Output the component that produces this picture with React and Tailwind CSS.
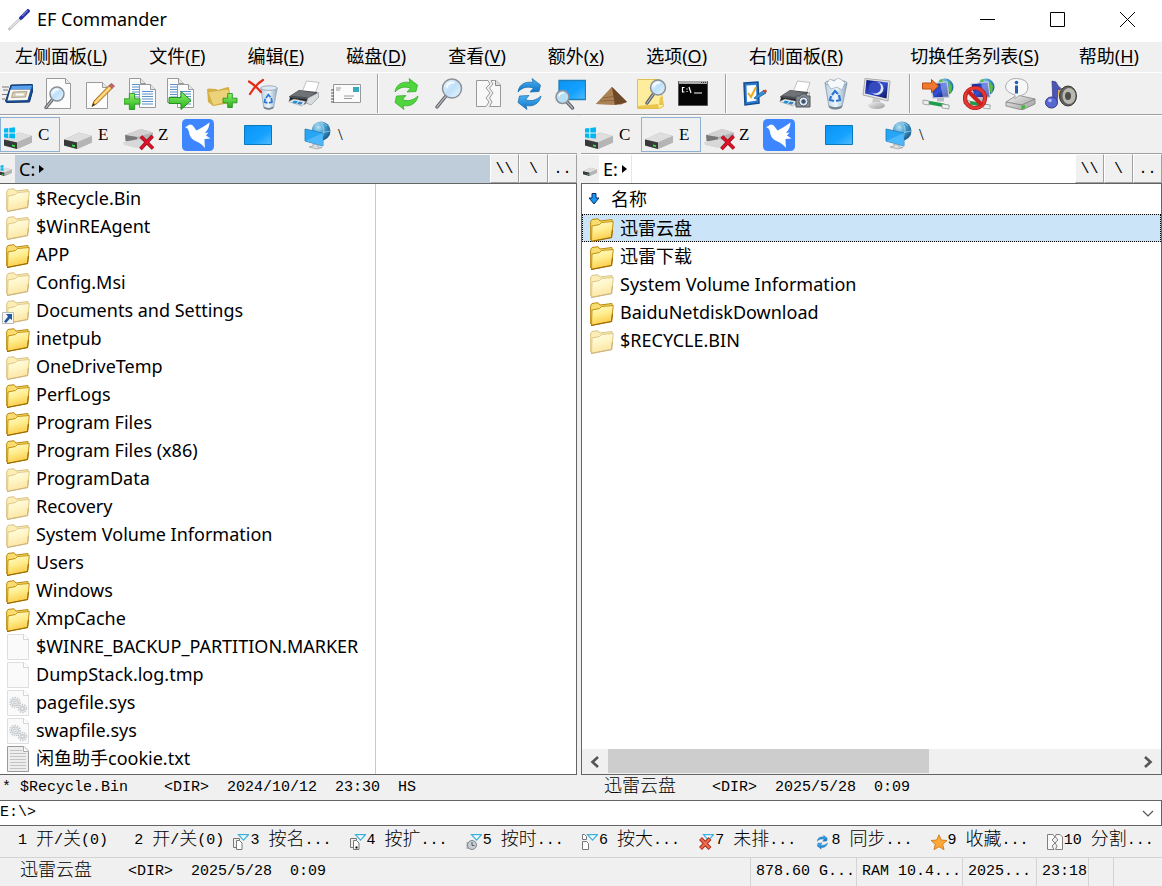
const UI = 'font-["Noto_Sans","Noto_Sans_CJK_SC",sans-serif]';

function Icon({ children, className = 'size-8', box = '0 0 32 32' }) {
  return (
    <svg viewBox={box} className={`shrink-0 ${className}`} aria-hidden="true">
      {children}
    </svg>
  );
}

function Defs() {
  return (
    <svg className="absolute size-0" aria-hidden="true">
      <defs>
        <linearGradient id="folder" x1="0" y1="0" x2="0.3" y2="1"><stop offset="0" stopColor="#fffbd0" /><stop offset="0.5" stopColor="#ffee90" /><stop offset="1" stopColor="#fccc4a" /></linearGradient>
        <linearGradient id="screen" x1="0" y1="0" x2="1" y2="1"><stop offset="0" stopColor="#0b93f5" /><stop offset="0.6" stopColor="#15a2ff" /><stop offset="1" stopColor="#55bdff" /></linearGradient>
        <linearGradient id="lens" x1="0" y1="0" x2="1" y2="1"><stop offset="0" stopColor="#f4fbff" /><stop offset="0.5" stopColor="#bfe0f8" /><stop offset="1" stopColor="#eaf6ff" /></linearGradient>
        <linearGradient id="green" x1="0" y1="0" x2="0" y2="1"><stop offset="0" stopColor="#8ff06a" /><stop offset="1" stopColor="#25b01c" /></linearGradient>
        <linearGradient id="blue" x1="0" y1="0" x2="0" y2="1"><stop offset="0" stopColor="#48b4f4" /><stop offset="1" stopColor="#1173c8" /></linearGradient>
        <linearGradient id="metal" x1="0" y1="0" x2="1" y2="1"><stop offset="0" stopColor="#f2f2f2" /><stop offset="1" stopColor="#9a9a9a" /></linearGradient>
        <linearGradient id="night" x1="0" y1="0" x2="1" y2="1"><stop offset="0" stopColor="#0a1575" /><stop offset="0.5" stopColor="#3452d8" /><stop offset="1" stopColor="#06104f" /></linearGradient>
        <radialGradient id="globe" cx="0.35" cy="0.3" r="0.8"><stop offset="0" stopColor="#b6e2f5" /><stop offset="0.5" stopColor="#3b96c8" /><stop offset="1" stopColor="#155280" /></radialGradient>
        <linearGradient id="bin" x1="0" y1="0" x2="1" y2="0"><stop offset="0" stopColor="#b9cfe2" /><stop offset="0.5" stopColor="#eef6fc" /><stop offset="1" stopColor="#8fa9c2" /></linearGradient>
      </defs>
    </svg>
  );
}

const Page = ({ x, y, w, h, c = 5 }) => (
  <>
    <path d={`M${x} ${y}h${w - c}l${c} ${c}v${h - c}h${-w}z`} fill="#fcfcfc" stroke="#9a9a9a" />
    <path d={`M${x + w - c} ${y}v${c}h${c}`} fill="#e8e8e8" stroke="#9a9a9a" />
  </>
);
const Lines = ({ x, y, w, n }) => (
  <path d={Array.from({ length: n }, (_, i) => `M${x} ${y + i * 2.5}h${w}`).join('')} stroke="#5a92cc" strokeWidth="1.1" />
);
const Plus = ({ x, y, s = 5 }) => (
  <path d={`M${x - s / 3} ${y - s}h${s / 1.5}v${s / 1.5}h${s / 1.5}v${s / 1.5}h${-s / 1.5}v${s / 1.5}h${-s / 1.5}v${-s / 1.5}h${-s / 1.5}v${-s / 1.5}h${s / 1.5}z`} fill="url(#green)" stroke="#1f8c14" strokeWidth="0.8" />
);
const Lens = ({ x, y, r, hx, hy, fill = 'url(#lens)' }) => (
  <>
    <path d={`M${x} ${y}L${hx} ${hy}`} stroke="#5c6066" strokeWidth="3.4" strokeLinecap="round" />
    <path d={`M${x} ${y}L${hx} ${hy}`} stroke="#b5b9bf" strokeWidth="1.2" strokeLinecap="round" />
    <circle cx={x} cy={y} r={r} fill={fill} stroke="#8b9097" strokeWidth="1.5" />
    <path d={`M${x - r * 0.55} ${y - r * 0.1}a${r * 0.6} ${r * 0.6} 0 0 1 ${r * 0.8} ${-r * 0.5}`} stroke="#fff" strokeWidth="1.4" fill="none" />
  </>
);
const Swap = ({ fill, edge }) => (
  <g fill={fill} stroke={edge} strokeWidth="0.7" strokeLinejoin="round">
    <path d="M5 14C6 6 13 3 20 4.500L19 .500 27.500 7 26 13.500 17 14 20.500 10C14 8 9 9.500 5 14z" />
    <path d="M28 18C26.500 26 19.500 29 13 27.500L14 31.500 5 24.500 6.500 18 16 17.500 12.500 21.500C18 24 23.500 22 28 18z" />
  </g>
);
const PrinterArt = () => (
  <>
    <path d="M14 14 18.500 3 31 4.500 27 16z" fill="#fff" stroke="#b0b4b8" strokeWidth="0.8" />
    <path d="M1 18.500 11 12 29 14 30.500 19 23 26 3 22z" fill="#4b4e52" />
    <path d="M3 17.500 11 12.500 27 15 20 19.500z" fill="#6f7377" />
    <path d="M20 20 30.500 14.500V19.500L23 27 18 25z" fill="#d9dcde" stroke="#8a8e92" strokeWidth="0.6" />
    <path d="M2 19.500 19 21.500 17 26.500 1 23z" fill="#24272b" />
    <path d="M.500 23.500 6 21 18 23.500 14 28z" fill="#eaf2f5" stroke="#888" strokeWidth="0.5" />
    <path d="M6 22.500l4 .8-2 2.500-4-1z" fill="#268fd0" /><path d="M11 23.500l4 .8-2 2.500-4-1z" fill="#3f7fc8" />
  </>
);
const BinArt = ({ full }) => (
  <>
    <path d="M5 5 9 29Q15 32.500 22 29L27 5z" fill="url(#bin)" stroke="#8899aa" strokeWidth="0.8" />
    <ellipse cx="16" cy="5" rx="11" ry="2.800" fill="#dceaf5" stroke="#8a9cae" />
    {full && <path d="M7 5 10 1 14 3 18 0 22 2 25 5 22 12 17 9 11 11z" fill="#f6f9fc" stroke="#9aa9b8" strokeWidth="0.7" />}
    <path d="M12 17l3-4 3 3M19 17l1 5-4 1M14 23l-4-1 1-4" fill="none" stroke="#2b78d4" strokeWidth="2.200" />
    <path d="M9 27.500Q15 31 22 27.500L21.500 30Q15 33 9.500 30z" fill="#77838e" />
  </>
);
const NetArt = () => (
  <>
    <circle cx="23" cy="9" r="8.500" fill="url(#globe)" />
    <path d="M17 2Q20 6 17 9L22 8 20 1zM26 3l4 5-1 8-3-4 1-4z" fill="#5cbd45" />
    <path d="M8 6 25 4 27 19 11 20z" fill="url(#night)" stroke="#c9ced8" strokeWidth="1.200" />
    <path d="M18 5 25 4 26.500 19 21 19.500z" fill="#b4c6f4" opacity="0.500" />
    <path d="M15 19.500h7v4h-7z" fill="#b8bcc4" />
    <path d="M2 24 9 25 20 27 27 29" stroke="#1e9d4a" strokeWidth="3.500" fill="none" />
    <path d="M1 22l6 1v4l-6-1zM20 26l7 1v4l-7-1z" fill="#eef0f0" stroke="#8a8f92" strokeWidth="0.700" />
  </>
);

const DriveArt = () => (
  <>
    <path d="M2 20.500 17 13.500 30 17V23.500L15 30 2 26.500z" fill="#a9a9a9" />
    <path d="M2 20.500 17 13.500 30 17 15 23.500z" fill="#dedede" />
    <path d="M2 20.500 15 23.500V30L2 26.500z" fill="#37393b" />
    <path d="M15 23.500 30 17V23.500L15 30z" fill="#b5b5b5" />
    <path d="M10 25.500l3 .8v1.800l-3-.8z" fill="#35e33b" />
  </>
);
const WinDrive = () => (
  <>
    <DriveArt />
    <path d="M2 9.500 6.300 9V13.500H2zM7.300 8.900 13 8.200V13.500H7.300zM2 14.500H6.300V19L2 18.500zM7.300 14.500H13V19.500L7.300 19z" fill="#00b7f0" />
  </>
);
const LostDrive = () => (
  <>
    <path d="M3 16 19 10 31 13.500V20L15 26 3 22z" fill="#b4b4b4" />
    <path d="M3 16 19 10 31 13.500 15 18z" fill="#d2d2d2" />
    <path d="M3 16 15 18V25L4 22z" fill="#777" />
    <path d="M1 23 17 20 29 25 15 29 2 26z" fill="#d8d8d8" />
    <path d="M19 17.500 31 29.500M30.500 17 18.500 30" stroke="#8d0713" strokeWidth="3.600" />
    <path d="M19 17.500 31 29.500M30.500 17 18.500 30" stroke="#e0112b" strokeWidth="2.400" />
  </>
);
const Bird = () => (
  <>
    <rect width="32" height="32" rx="4.500" fill="#3e86ff" />
    <path d="M3 8Q5.500 7.500 6.500 6 9.500 4.500 11.500 7.500L14.500 11.500Q20 9 27.500 3.500 27.500 9 23 14L26.500 13.500 24 16.500 28.500 19.500 22.500 20Q22.500 24 23 29 19 24 14.500 22.500 9 20.500 7.500 15.500 7 11.500 5.500 9.500z" fill="#fff" />
  </>
);
const ScreenArt = () => <path d="M2.500 6.500h27v19h-27z" fill="url(#screen)" stroke="#0879bd" />;
const Network = () => (
  <>
    <circle cx="19" cy="12" r="9.500" fill="url(#globe)" />
    <path d="M13 6q7-5 12 1M10 12q10 3 19 0M19 2.500q6 9 0 19" stroke="#a9d7ec" strokeWidth="0.700" fill="none" />
    <path d="M3 10 21 14V27L3 22z" fill="#28a6f5" stroke="#197ab7" strokeWidth="0.800" />
    <path d="M3 22 21 14V27z" fill="#65c3ff" opacity="0.600" />
    <path d="M11 25l5 1v2l4 .500-5 1.500-8-2 4-1z" fill="#d9dde0" stroke="#8d9296" strokeWidth="0.600" />
  </>
);

const groups = [
  [
    ['启动', <><path d="M1 9h7M2 12h5M1 16.500h5M1 21h3" stroke="#777" strokeWidth="1" /><path d="M10 7 31 6.500 33 8 28.500 24 5.500 24.500 4.500 23z" fill="#1a4f9c" stroke="#0f3467" /><path d="M11 8 31 7.500 30 11 10 11z" fill="#57a0ec" /><path d="M9.500 11.500 29.500 11.500 26.500 22 6.500 22.500z" fill="#faf7ea" /><path d="M12 14 26 13.500 24.500 19 10.500 19.500z" fill="#d5cfae" stroke="#877" strokeWidth="0.600" /><path d="M15 15.500h8l-.5 2h-8z" fill="#fff" /></>],
    ['查看', <><Page x={4.500} y={0.500} w={24} h={30} /><Lens x={15} y={16} r={7} hx={4} hy={29.500} /></>],
    ['编辑', <><Page x={3.500} y={4.500} w={21} h={26} /><path d="M9 28.500 11 23 26 7.500 29 10.500 14 25.500z" fill="#f7b842" stroke="#946123" strokeWidth="0.900" /><path d="M12 25 27.500 9" stroke="#ffe6a1" strokeWidth="1.300" /><path d="M26 7.500 29 10.500 31.500 8 28.500 5.500z" fill="#d35e68" stroke="#7c4f56" strokeWidth="0.700" /><path d="M9 28.500 10 25 12 27z" fill="#333" /></>],
    ['复制', <><Page x={5.500} y={0.500} w={16} h={24} /><Lines x={8} y={6.500} w={8} n={7} /><Page x={15.500} y={6.500} w={16} h={23} /><Lines x={18} y={13.500} w={11} n={6} /><Plus x={8} y={23.500} s={8} /></>],
    ['移动', <><Page x={2.500} y={0.500} w={16} h={24} /><Lines x={5} y={6.500} w={8} n={7} /><Page x={12.500} y={6.500} w={16} h={23} /><Lines x={15} y={13.500} w={11} n={6} /><path d="M4 19.500h12v-6L26 22.500 16 31.500v-6H4z" fill="url(#green)" stroke="#23941b" /></>],
    ['新建文件夹', <><path d="M1 11 3 10.500 10 11 12 12 20 9.500 23 9 25 25 7 28 2 24z" fill="#d4b045" /><path d="M2 14 22 11 26 23 7 27.500z" fill="#ecd278" stroke="#c9a43b" strokeWidth="0.600" /><Plus x={24} y={22.500} s={7} /></>],
    ['删除', <><g transform="translate(10 6) scale(.75 .82)"><BinArt /></g><path d="M2 3.500Q9 8 14 14M16 2Q9 6 3 16" stroke="#e52a18" strokeWidth="2.200" fill="none" strokeLinecap="round" /></>],
    ['打印', <PrinterArt />],
    ['邮件', <><path d="M4.500 6.500h27v18h-27z" fill="#fbfbfb" stroke="#999" /><path d="M24 9h6v5h-6z" fill="#36a9c0" /><path d="M7 10h5M7 12h4M15 18h10M15 20.500h8" stroke="#9a9a9a" /><path d="M2 12h3M2 15h3M2 18h3M2 21h3M2 24h3" stroke="#555" strokeWidth="1.200" /></>],
  ],
  [
    ['刷新', <Swap fill="#4fd63c" edge="#2fa524" />],
    ['搜索', <Lens x={21} y={10.500} r={9.500} hx={6} hy={29} />],
    ['拆分', <><path d="M4.500 2.500H16L18 6 14 10 18 15 14 20 17 24 14 28.500H4.500z" fill="#f8f8f8" stroke="#999" /><path d="M19 2.500H24L28.500 7V28.500H17.500L20 24 17.500 20 21 15 17.500 10 21 6z" fill="#f8f8f8" stroke="#999" /><path d="M23.500 2.500v5h5" fill="#ddd" stroke="#888" /></>],
    ['同步', <Swap fill="url(#blue)" edge="#1768a8" />],
    ['屏幕搜索', <><path d="M5 2.500h26.500v19H5z" fill="url(#screen)" stroke="#1f7fb8" strokeWidth="1.300" /><Lens x={8.500} y={19} r={6.500} hx={18.500} hy={30} fill="#b6def4" /></>],
    ['打包', <><path d="M1 26 17 9 32 24 26 26.500z" fill="#8b6239" /><path d="M1 26 17 9 20 27z" fill="#ab8355" /><path d="M17 9 32 24 20 27z" fill="#6d4826" /><path d="M8 20 22 18M5 23 28 22" stroke="#735030" strokeWidth="0.600" /></>],
    ['查找', <><path d="M1.500 1.500h22l4 27-4 2h-22z" fill="#ffed9e" stroke="#e2c04d" /><path d="M23 27h4v-8h-3zM2 28l20-2 1 4H2z" fill="#eac64f" /><Lens x={22} y={9.500} r={7.500} hx={11} hy={25} /></>],
    ['命令行', <><path d="M1.500 3.500h29v24h-29z" fill="#050505" stroke="#555" /><path d="M2 3h28v3H2z" fill="#aaa" /><path d="M24 4.500h1M26 4.500h1M28 4.500h1" stroke="#333" /><path d="M7.500 9.500H5.500v4.500h2M10 10.500v1M10 13v1M12 9l2 6M17 15h8" stroke="#fff" strokeWidth="1.200" fill="none" /></>],
  ],
  [
    ['选项', <><path d="M6 5 20 4 21 25 7 27z" fill="#2d7cd0" stroke="#124d93" strokeWidth="1.500" /><path d="M8.500 7.500 18 7 18.500 22.500 9 24z" fill="#fff" /><path d="M10 15 13 19 18 9" fill="none" stroke="#f1a820" strokeWidth="2" /><path d="M16 20 26 12 28 15 18 21z" fill="#3694dd" stroke="#17558f" strokeWidth="0.800" /><path d="M25 12.500l3-1 1 2-2 1.500z" fill="#d24225" /></>],
    ['截图打印', <><PrinterArt /><path d="M17 18h4l1-2h5l1 2h3v11H17z" fill="#858c94" stroke="#50575e" /><circle cx="24.500" cy="23.500" r="4.500" fill="#dfe7ef" stroke="#50575e" /><circle cx="24.500" cy="23.500" r="2.200" fill="#3d5676" /></>],
    ['回收站', <BinArt full />],
    ['屏幕保护', <><path d="M4 0.500 29 3 27 23 2 17z" fill="#e4e4e4" stroke="#aaa" /><path d="M5.500 2 27 4.500 25.500 20.500 4 15.500z" fill="url(#night)" /><circle cx="16" cy="10.500" r="6.500" fill="#dde4fd" /><circle cx="14" cy="9.500" r="6" fill="#344abe" /><path d="M12 20l7 2 1 4h-9z" fill="#c8c8c8" /><ellipse cx="15.500" cy="27.500" rx="8.500" ry="3.500" fill="url(#metal)" /></>],
  ],
  [
    ['连接网络', <><NetArt /><path d="M0.500 5h9V1.500l7 6.500-7 6.500V11h-9z" fill="#ef7a2f" stroke="#ba5113" /></>],
    ['断开网络', <><NetArt /><circle cx="12" cy="20" r="10" fill="none" stroke="#ae1717" strokeWidth="4.200" /><circle cx="12" cy="20" r="10" fill="none" stroke="#e43834" strokeWidth="2.800" /><path d="M5 13 19 27" stroke="#cb201e" strokeWidth="4" /></>],
    ['磁盘信息', <><path d="M2 24 13 17 31 21V26L18 32 2 28z" fill="url(#metal)" stroke="#818181" strokeWidth="0.800" /><path d="M2 24 18 27 31 21M18 27v5" stroke="#777" strokeWidth="0.800" fill="none" /><path d="M18 28l3-1v3l-3 1z" fill="#38bb28" /><path d="M14 18l-3 3v-4Q1 14 1.500 8 4 0 12.500 0.500 24 1 24 9 24 17 14 18z" fill="#f5f7f8" stroke="#aaaeb2" /><circle cx="12.500" cy="4.500" r="1.800" fill="#2a5cad" /><path d="M11 7.500h3v8h-3z" fill="#2a5cad" /></>],
    ['多媒体', <><path d="M7 3 11 4Q12 8 18 12 16 14 13 11L12 26H8z" fill="#4b55b8" stroke="#2f3779" strokeWidth="0.700" /><ellipse cx="6.500" cy="24.500" rx="6" ry="5.500" fill="#5967d0" stroke="#353b8b" /><circle cx="5" cy="22.500" r="1.800" fill="#b3bcff" /><path d="M13 13 20 9V25L14 21z" fill="#e7a834" /><ellipse cx="23" cy="18" rx="8.500" ry="10" fill="#61615c" stroke="#3c3c3c" /><ellipse cx="24" cy="18" rx="6.500" ry="8" fill="#b9b9b2" /><ellipse cx="23" cy="18" rx="3" ry="4" fill="#4c4c48" /></>],
  ],
];

function Mono({ text }) {
  return text.split(/([\u4e00-\u9fff]+)/).map((part, i) =>
    i % 2 ? <span key={i} className="align-[-1px] text-[18px] leading-none font-light">{part}</span> : part,
  );
}

function MenuItem({ label, hot }) {
  return (
    <button type="button" className="px-5 text-[18px] leading-[29px] whitespace-nowrap">
      {label}(<span className="underline decoration-1 underline-offset-2">{hot}</span>)
    </button>
  );
}

const drives = [
  ['C', <WinDrive />],
  ['E', <DriveArt />],
  ['Z', <LostDrive />],
  ['', <Bird />, '迅雷'],
  ['', <ScreenArt />, '桌面'],
  ['\\', <Network />],
];

function DriveBar({ active }) {
  return (
    <div className="flex h-[38px] items-center border-t border-white">
      {drives.map(([letter, art, label], i) => (
        <button
          key={i}
          type="button"
          aria-label={label}
          className={`flex h-[35px] w-[60px] items-center gap-1 border pl-px ${letter && letter === active ? 'border-[#8fb1d3]' : 'border-transparent'}`}
        >
          <Icon>{art}</Icon>
          <span className="font-['Liberation_Serif',serif] text-[17px]">{letter}</span>
        </button>
      ))}
    </div>
  );
}

function PathBar({ drive, art, active }) {
  return (
    <div className="flex h-[30px] border-t border-[#a0a0a0] bg-[#f0f0f0]">
      <div className={`flex items-center border-t border-white ${active ? 'w-[18px] justify-center' : 'w-[15px] justify-end pr-0.5'}`}>
        <Icon className="size-4">{art}</Icon>
      </div>
      <div className={`flex flex-1 items-center gap-1 border-t border-white pl-1 ${UI} text-[18px] ${active ? 'bg-white' : 'bg-[#bfcddb]'}`}>
        <span>{drive}:</span>
        <Icon className="h-2 w-[5px]" box="0 0 5 8"><path d="M0 0 5 4 0 8z" /></Icon>
        {active && <span className="h-full w-px bg-[#e6e6e6]" />}
      </div>
      {['\\\\', '\\', '..'].map((t) => (
        <button key={t} type="button" className="w-[29px] border-t border-r border-b border-l border-t-white border-r-[#a0a0a0] border-b-[#a0a0a0] border-l-white pt-1">
          {t}
        </button>
      ))}
    </div>
  );
}

function Folder({ faded, link }) {
  return (
    <span className="relative mt-1 flex">
      <Icon className={faded ? 'size-6 opacity-50' : 'size-6'} box="0 0 24 24">
        <path d="M.700 3.500 2 1.500 8 .700 10 3 22 1.500V4L20 19 2 23 .700 22z" fill="#f7dc6f" stroke="#b98708" />
        <path d="M2 8 9.500 6.500 11.500 4.500 23.300 3.500 21.500 19.500 1.500 23.300z" fill="url(#folder)" stroke="#c4920e" />
        <path d="M1 23.500 21.500 19.500 22.500 12" fill="none" stroke="#9c6c04" strokeWidth="1.200" />
      </Icon>
      {link && (
        <Icon className="absolute -left-1 top-3 size-3" box="0 0 12 12">
          <path d="M.500.500h11v11H.500z" fill="#f7f7f7" stroke="#b8b8b8" />
          <path d="M4 2h6v6L8 6.500 4 11 2 9.500 6 4.500z" fill="#22599e" />
        </Icon>
      )}
    </span>
  );
}

const Gear = ({ x, y, r }) => (
  <g stroke="#c5c9cc" fill="none">
    <circle cx={x} cy={y} r={r} strokeWidth="1.500" strokeDasharray="1.500 1" />
    <circle cx={x} cy={y} r={r - 1.500} fill="#e3e6e8" />
    <circle cx={x} cy={y} r="1.200" fill="#fff" />
  </g>
);

function FileIcon({ kind }) {
  const strong = kind === 'text';
  return (
    <Icon className="ml-px mt-0.5 h-[26px] w-[22px]" box="0 0 22 26">
      <path d="M.500.500H17L21.500 5V25.500H.500z" fill={strong ? '#eeeeee' : '#fafafa'} stroke={strong ? '#999' : '#dedede'} />
      <path d="M16.500.500V5.500H21.500" fill="#fff" stroke={strong ? '#aaa' : '#d5d5d5'} />
      {strong && <path d="M3 4.500h12M3 7.500h16M3 10.500h16M3 13.500h16M3 16.500h16M3 19.500h16M3 22.500h16" stroke="#c3c3c3" />}
      {kind === 'gear' && <><Gear x={8} y={12.500} r={5} /><Gear x={15.500} y={18.500} r={4} /></>}
    </Icon>
  );
}

const leftItems = [
  ['$Recycle.Bin', 'faded'], ['$WinREAgent', 'faded'], ['APP', 'folder'], ['Config.Msi', 'faded'],
  ['Documents and Settings', 'link'], ['inetpub', 'folder'], ['OneDriveTemp', 'faded'], ['PerfLogs', 'folder'],
  ['Program Files', 'folder'], ['Program Files (x86)', 'folder'], ['ProgramData', 'faded'], ['Recovery', 'faded'],
  ['System Volume Information', 'faded'], ['Users', 'folder'], ['Windows', 'folder'], ['XmpCache', 'folder'],
  ['$WINRE_BACKUP_PARTITION.MARKER', 'blank'], ['DumpStack.log.tmp', 'blank'], ['pagefile.sys', 'gear'],
  ['swapfile.sys', 'gear'], ['闲鱼助手cookie.txt', 'text'],
];
const rightItems = [
  ['迅雷云盘', 'folder'], ['迅雷下载', 'folder'], ['System Volume Information', 'faded'],
  ['BaiduNetdiskDownload', 'folder'], ['$RECYCLE.BIN', 'faded'],
];

function Entry({ name, kind }) {
  const isFolder = kind === 'folder' || kind === 'faded' || kind === 'link';
  return (
    <div className="flex h-7 pl-1.5">
      <span className="w-[30px] shrink-0">
        {isFolder ? <Folder faded={kind !== 'folder'} link={kind === 'link'} /> : <FileIcon kind={kind} />}
      </span>
      <span className="leading-7 whitespace-nowrap">{name}</span>
    </div>
  );
}

const SortArt = ({ children }) => (
  <>
    {children}
    <path d="M5.500 .600h10l-5 5.500z" fill="#f4fcff" stroke="#3fb0dc" strokeWidth="1.200" />
  </>
);
const Sheets = ({ fill = '#fff' }) => (
  <><path d="M.500 4.500h6v9h-6z" fill="#f0f0f0" stroke="#777" /><path d="M3.500 6.500h3l2.500 2.500v6.500h-5.500z" fill={fill} stroke="#777" /></>
);
const fkeys = [
  ['1 开/关(0)'],
  ['2 开/关(0)'],
  ['3 按名...', <SortArt><Sheets /></SortArt>],
  ['4 按扩...', <SortArt><Sheets /><path d="M5.500 12.500h2v2h-2z" /></SortArt>],
  ['5 按时...', <SortArt><path d="M.500 8h5v7h-5z" fill="#b0b6ba" /><circle cx="6" cy="11" r="4.500" fill="#c8ced2" stroke="#7d868c" /><path d="M6 8v3.500h2.500" stroke="#4f5a61" fill="none" /></SortArt>],
  ['6 按大...', <SortArt><path d="M.500.500h2l2 2v3h-4zM.500 7.500h4l2 2v6h-6z" fill="#fff" stroke="#777" /></SortArt>],
  ['7 未排...', <><SortArt /><path d="M2.500 4.500 12 14.500M12 4.500 2.500 14.500" stroke="#a92b1b" strokeWidth="4" /><path d="M3 5 11.500 14M11.500 5 3 14" stroke="#ec6a4f" strokeWidth="2.200" /></>],
  ['8 同步...', <g transform="translate(1 1) scale(.45)"><Swap fill="url(#blue)" edge="#0b568e" /></g>],
  ['9 收藏...', <path d="M8 .800 10.300 6 16 6.500 11.700 10.300 13 15.700 8 12.700 3 15.700 4.300 10.300 0 6.500 5.700 6z" fill="#fba836" stroke="#c96f12" strokeWidth="0.800" />],
  ['10 分割...', <path d="M.500.500H6L8 3 5 6 8 9 5 12 7 15.500H.500zM9 .500h4l2.500 2.500v12.500H8.500L10 12 8 9 11 6 8.500 3z" fill="#fafafa" stroke="#808080" />],
];

export default function App() {
  return (
    <div className="flex min-h-screen flex-col overflow-x-hidden bg-[#f0f0f0] font-['Liberation_Mono','Noto_Sans_CJK_SC',monospace] text-[15px] text-black">
      <Defs />
      <header className={`flex h-[42px] items-center bg-white pl-2 ${UI}`}>
        <Icon className="size-6" box="0 0 24 24">
          <path d="M1.500 20 12 10" stroke="#bcbcbc" strokeWidth="2.600" strokeLinecap="round" />
          <path d="M2 19.500 12 10" stroke="#e8e8e8" strokeWidth="1.200" />
          <path d="M13 9 20 2" stroke="#2430a6" strokeWidth="3.800" strokeLinecap="round" />
          <path d="M14 7 19.500 1.500" stroke="#6f7bd5" strokeWidth="1.200" />
        </Icon>
        <h1 className="ml-[5px] flex-1 pb-1 text-[18px]">EF Commander</h1>
        {[
          ['最小化', 'M0 7.500h15'],
          ['最大化', 'M.500.500h14v14H.500z'],
          ['关闭', 'M0 0 15 15M15 0 0 15'],
        ].map(([label, d]) => (
          <button key={label} type="button" aria-label={label} className="flex h-full w-[70px] items-center justify-center pb-1">
            <Icon className="size-[15px]" box="0 0 15 15"><path d={d} fill="none" stroke="#000" /></Icon>
          </button>
        ))}
      </header>

      <nav className={`flex h-[31px] border-b border-white pr-[3px] ${UI}`} aria-label="主菜单">
        <div className="-ml-[5px] flex flex-1 items-start gap-0.5">
          {[['左侧面板', 'L'], ['文件', 'F'], ['编辑', 'E'], ['磁盘', 'D'], ['查看', 'V'], ['额外', 'x'], ['选项', 'O'], ['右侧面板', 'R']].map(([label, hot]) => (
            <MenuItem key={hot} label={label} hot={hot} />
          ))}
        </div>
        <div className="flex items-start">
          <MenuItem label="切换任务列表" hot="S" />
          <MenuItem label="帮助" hot="H" />
        </div>
      </nav>

      <div className="flex h-[42px] items-center border-b border-[#a0a0a0] pl-px" role="toolbar">
        {groups.map((group, g) => (
          <div key={g} className="flex items-center">
            {g > 0 && <span className="mr-[11px] ml-4 h-[39px] w-0.5 border-r border-l border-r-white border-l-[#a0a0a0]" />}
            <div className="flex gap-[9px]">
              {group.map(([label, art]) => (
                <button key={label} type="button" aria-label={label}><Icon>{art}</Icon></button>
              ))}
            </div>
          </div>
        ))}
      </div>

      <main className="grid flex-1 grid-cols-[577fr_581fr] gap-1">
        <section className="flex min-w-0 flex-col">
          <DriveBar active="C" />
          <PathBar drive="C" art={<WinDrive />} />
          <div className={`flex-1 border-y border-r border-[#646464] bg-white text-[18px] ${UI}`}>
            <ul className="h-full w-[376px] border-r border-[#c8c8c8]">
              {leftItems.map(([name, kind]) => (
                <li key={name}><Entry name={name} kind={kind} /></li>
              ))}
            </ul>
          </div>
          <div className="h-[25px] pl-0.5 leading-[25px] whitespace-pre">{'* $Recycle.Bin    <DIR>  2024/10/12  23:30  HS'}</div>
        </section>

        <section className="flex min-w-0 flex-col">
          <DriveBar active="E" />
          <PathBar drive="E" art={<DriveArt />} active />
          <div className={`flex flex-1 flex-col border border-[#646464] bg-white text-[18px] ${UI}`}>
            <table className="w-full border-collapse">
              <thead>
                <tr>
                  <th className="h-[30px] p-0 text-left font-normal">
                    <button type="button" className="flex items-center gap-[11px] pl-1.5">
                      <Icon className="size-3" box="0 0 12 12">
                        <path d="M4 .500h4V5h3L6 11 1 5h3z" fill="#1596f0" stroke="#0b2f68" />
                      </Icon>
                      名称
                    </button>
                  </th>
                </tr>
              </thead>
              <tbody>
                {rightItems.map(([name, kind], i) => (
                  <tr key={name}>
                    <td className={`p-0 pl-0.5 ${i === 0 ? 'bg-[#cce4f7] outline-1 -outline-offset-1 outline-dotted outline-black' : ''}`}>
                      <Entry name={name} kind={kind} />
                    </td>
                  </tr>
                ))}
              </tbody>
            </table>
            <div className="mt-auto flex h-[25px] bg-[#f0f0f0]">
              <button type="button" aria-label="向左滚动" className="flex w-[26px] items-center justify-center">
                <Icon className="h-3 w-2.5" box="0 0 10 12"><path d="M8 1 2.500 6 8 11" fill="none" stroke="#555" strokeWidth="2.600" /></Icon>
              </button>
              <div className="flex-1"><div className="h-6 w-[61%] bg-[#cdcdcd]" /></div>
              <button type="button" aria-label="向右滚动" className="flex w-[26px] items-center justify-center">
                <Icon className="h-3 w-2.5" box="0 0 10 12"><path d="M2 1 7.500 6 2 11" fill="none" stroke="#555" strokeWidth="2.600" /></Icon>
              </button>
            </div>
          </div>
          <div className="h-[25px] pl-[23px] leading-[25px] whitespace-pre"><Mono text="迅雷云盘    <DIR>  2025/5/28  0:09" /></div>
        </section>
      </main>

      <div className="flex h-[26px] border-y border-r border-[#646464] bg-white">
        <input aria-label="命令行" defaultValue="E:\>" className="min-w-0 flex-1 bg-transparent outline-none" />
        <button type="button" aria-label="历史记录" className="flex w-[26px] items-center justify-center">
          <Icon className="h-[7px] w-3" box="0 0 12 7"><path d="M1 1 6 6 11 1" fill="none" stroke="#555" strokeWidth="1.200" /></Icon>
        </button>
      </div>

      <div className="grid h-[31px] grid-cols-10">
        {fkeys.map(([text, art]) => (
          <button key={text} type="button" className="flex min-w-0 items-center gap-px pl-px whitespace-pre">
            <Icon className="size-4" box="0 0 16 16">{art}</Icon>
            <span><Mono text={text} /></span>
          </button>
        ))}
      </div>

      <footer className="flex h-[29px] border-t border-[#d4d4d4] leading-[28px] whitespace-pre">
        <div className="min-w-0 flex-1 pl-5"><Mono text="迅雷云盘    <DIR>  2025/5/28  0:09" /></div>
        <div className="w-[106px] border-l border-[#d4d4d4] pl-[5px]">878.60 G...</div>
        <div className="w-[106px] border-l border-[#d4d4d4] pl-[5px]">RAM 10.4...</div>
        <div className="w-[74px] border-l border-[#d4d4d4] pl-[5px]">2025...</div>
        <div className="w-[52px] border-l border-[#d4d4d4] pl-[5px]">23:18</div>
        <div className="w-[25px] border-l border-[#d4d4d4]" />
        <div className="w-[49px] border-l border-[#d4d4d4]" />
      </footer>
    </div>
  );
}
